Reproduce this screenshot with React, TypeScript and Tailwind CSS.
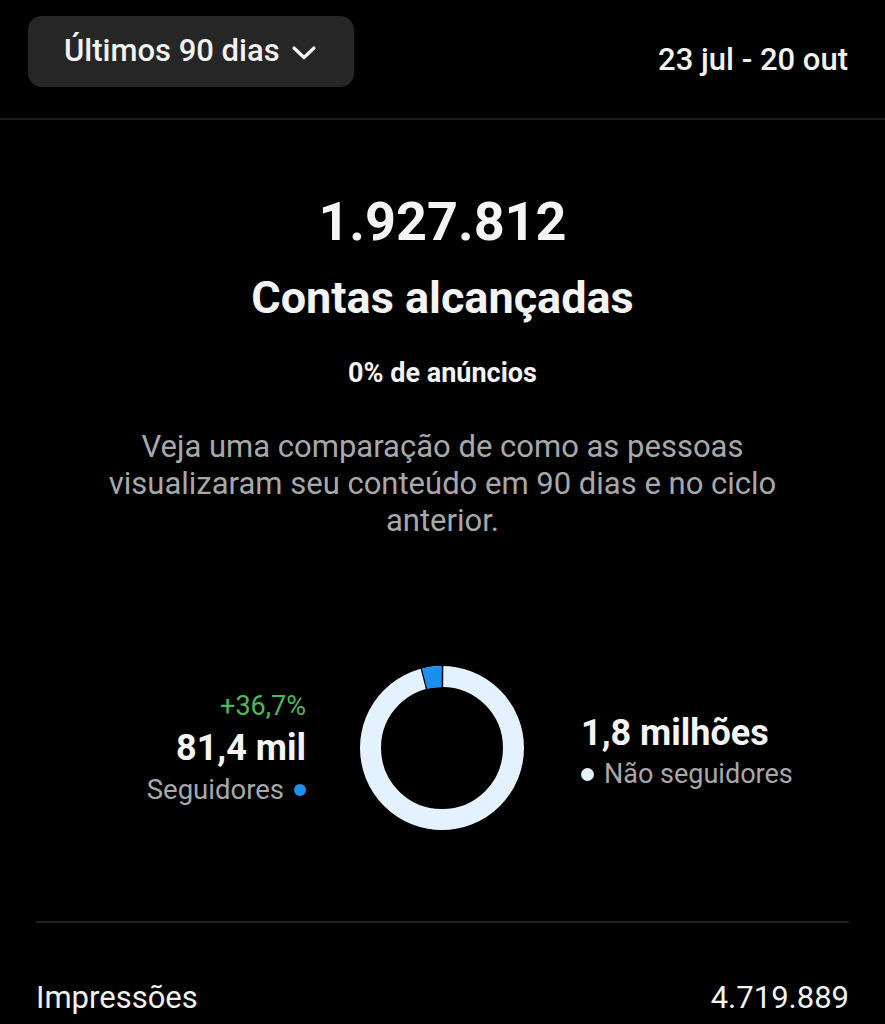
import React from "react";

const font = { fontFamily: "Roboto, 'Noto Sans', sans-serif" };

// Anel do gráfico: seguidores (azul) vs não seguidores (claro)
function Donut() {
  const size = 164;
  const c = size / 2;
  const r = 71.5;
  const toXY = (deg: number) => {
    const a = ((deg - 90) * Math.PI) / 180;
    return [c + r * Math.cos(a), c + r * Math.sin(a)];
  };
  const [x1, y1] = toXY(-14);
  const [x2, y2] = toXY(0);
  return (
    <svg width={size} height={size} viewBox={`0 0 ${size} ${size}`}>
      <circle cx={c} cy={c} r={r} fill="none" stroke="#e4f2ff" strokeWidth={21} />
      <path
        d={`M ${x1} ${y1} A ${r} ${r} 0 0 1 ${x2} ${y2}`}
        fill="none"
        stroke="#1b8fef"
        strokeWidth={21}
      />
      {[-14.6, 0.4].map((d) => {
        const a = ((d - 90) * Math.PI) / 180;
        return (
          <line
            key={d}
            x1={c + (r - 11) * Math.cos(a)}
            y1={c + (r - 11) * Math.sin(a)}
            x2={c + (r + 11) * Math.cos(a)}
            y2={c + (r + 11) * Math.sin(a)}
            stroke="#000"
            strokeWidth={1.5}
          />
        );
      })}
    </svg>
  );
}

export default function App() {
  return (
    <div className="min-h-screen w-full bg-black text-white" style={font}>
      <div className="flex h-[120px] items-start justify-between border-b-2 border-[#1a1a1a] pl-[28px] pr-[37px] pt-4">
        <button className="flex h-[71px] items-center gap-[11px] rounded-[14px] bg-[#262626] pl-9 pr-[37px] text-[31px] font-medium text-[#f2f2f2]">
          Últimos 90 dias
          <svg width="26" height="16" viewBox="0 0 26 16" className="mt-[2px]">
            <polyline
              points="3,3 13,12.5 23,3"
              fill="none"
              stroke="#f2f2f2"
              strokeWidth="3.2"
              strokeLinecap="round"
              strokeLinejoin="round"
            />
          </svg>
        </button>
        <div className="mt-[27px] text-[31px] font-medium leading-[34px] text-[#f2f2f2]">
          23 jul - 20 out
        </div>
      </div>

      <div className="flex flex-col items-center text-center">
        <div className="mt-[70px] text-[54px] font-bold leading-[64px] text-[#f4f4f4]">
          1.927.812
        </div>
        <div className="mt-[21px] text-[45px] font-bold leading-[46px] text-[#f4f4f4]">
          Contas alcançadas
        </div>
        <div className="mt-[37px] text-[27px] font-bold leading-[30px] text-[#f4f4f4]">
          0% de anúncios
        </div>
        <p className="mt-[40px] w-[700px] text-[31px] leading-[37px] text-[#a8a8a8]">
          Veja uma comparação de como as pessoas visualizaram seu conteúdo em 90 dias e no ciclo
          anterior.
        </p>

        <div className="mt-[127px] flex w-full items-center">
          <div className="flex w-[306px] flex-col items-end">
            <div className="text-[27px] leading-[42px] text-[#4cb85a]">+36,7%</div>
            <div className="text-[36px] font-bold leading-[42px] text-[#f4f4f4]">81,4 mil</div>
            <div className="flex items-center gap-[10px] text-[27.5px] leading-[42px] text-[#a8a8a8]">
              Seguidores
              <span className="h-[12px] w-[12px] rounded-full bg-[#1b8fef]" />
            </div>
          </div>
          <div className="ml-[54px]">
            <Donut />
          </div>
          <div className="ml-[57px] flex flex-col items-start pt-[11px]">
            <div className="text-[36px] font-bold leading-[41px] text-[#f4f4f4]">1,8 milhões</div>
            <div className="flex items-center gap-[10px] text-[27px] leading-[41px] text-[#a8a8a8]">
              <span className="h-[13px] w-[13px] rounded-full bg-[#e4f2ff]" />
              Não seguidores
            </div>
          </div>
        </div>
      </div>

      <div className="mx-[36px] mt-[91px] h-[2px] bg-[#1f1f1f]" />
      <div className="mx-[36px] mt-[59px] flex items-center justify-between text-[31px] leading-[32px] text-[#f2f2f2]">
        <span>Impressões</span>
        <span>4.719.889</span>
      </div>
    </div>
  );
}
